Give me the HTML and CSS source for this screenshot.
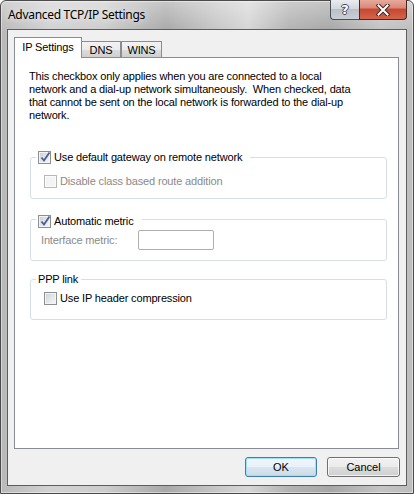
FILE: index.html
```html
<!DOCTYPE html>
<html lang="en">
<head>
    <meta charset="UTF-8">
    <title>Advanced TCP/IP Settings</title>
    <link rel="stylesheet" href="styles.css">
</head>
<body>
    <div class="window">
        <div class="titlebar">
            <span class="title">Advanced TCP/IP Settings</span>
            <div class="caption-buttons">
                <div class="cap-btn help">?</div>
                <div class="cap-btn close">
                    <svg width="14" height="12" viewBox="0 0 14 12">
                        <path d="M2.5 1.5 L11.5 10.5 M11.5 1.5 L2.5 10.5" stroke="#3b2a2a" stroke-width="4" stroke-linecap="square"/>
                        <path d="M2.5 1.5 L11.5 10.5 M11.5 1.5 L2.5 10.5" stroke="#fff" stroke-width="2" stroke-linecap="square"/>
                    </svg>
                </div>
            </div>
        </div>

        <div class="client">
            <div class="tabs">
                <div class="tab active">IP Settings</div>
                <div class="tab dns">DNS</div>
                <div class="tab wins">WINS</div>
            </div>

            <div class="panel">
                <p class="note">This checkbox only applies when you are connected to a local<br>network and a dial-up network simultaneously.&nbsp; When checked, data<br>that cannot be sent on the local network is forwarded to the dial-up<br>network.</p>

                <div class="group gateway">
                    <div class="legend">
                        <span class="check checked">
                            <svg width="11" height="11" viewBox="0 0 11 11"><path d="M1.5 5.5 L4 8.5 L9.5 0.5" fill="none" stroke="#4a5f97" stroke-width="1.8"/></svg>
                        </span>
                        Use default gateway on remote network
                    </div>
                    <div class="row disabled">
                        <span class="check off"></span>
                        Disable class based route addition
                    </div>
                </div>

                <div class="group metric">
                    <div class="legend">
                        <span class="check checked">
                            <svg width="11" height="11" viewBox="0 0 11 11"><path d="M1.5 5.5 L4 8.5 L9.5 0.5" fill="none" stroke="#4a5f97" stroke-width="1.8"/></svg>
                        </span>
                        Automatic metric
                    </div>
                    <div class="field disabled">
                        <span class="field-label">Interface metric:</span>
                        <span class="textbox"></span>
                    </div>
                </div>

                <div class="group ppp">
                    <div class="legend text-only">PPP link</div>
                    <div class="row">
                        <span class="check"></span>
                        Use IP header compression
                    </div>
                </div>
            </div>

            <div class="actions">
                <button class="btn default">OK</button>
                <button class="btn cancel">Cancel</button>
            </div>
        </div>
    </div>
</body>
</html>
```

FILE: styles.css
```css
* {
    box-sizing: border-box;
}

html, body {
    margin: 0;
    padding: 0;
}

body {
    width: 414px;
    height: 494px;
    overflow: hidden;
    font-family: "Liberation Sans", Arial, sans-serif;
    font-size: 11px;
    letter-spacing: -0.15px;
    color: #000;
    background: #fff;
}

.window {
    width: 414px;
    height: 494px;
    border: 1px solid #4b4b4b;
    border-radius: 6px 6px 0 0;
    padding: 0 6px 7px 6px;
    display: flex;
    flex-direction: column;
    background:
        linear-gradient(180deg, rgba(255, 255, 255, 0.35) 0, rgba(255, 255, 255, 0) 30px),
        linear-gradient(90deg, #b9b9b9 0%, #d2d2d2 12%, #cdcdcd 25%, #a9a9a9 40%, #c6c6c6 52%, #d6d6d6 60%, #b3b3b3 70%, #a7a7a7 80%, #c4c4c4 92%, #bdbdbd 100%);
    box-shadow: inset 0 0 0 1px rgba(255, 255, 255, 0.45);
}

/* title bar */

.titlebar {
    height: 28px;
    display: flex;
    align-items: flex-start;
}

.title {
    font-family: "Noto Sans", sans-serif;
    font-size: 12px;
    letter-spacing: -0.3px;
    line-height: 16px;
    margin: 6px 0 0 1px;
    color: #000;
    text-shadow: 0 0 6px rgba(255, 255, 255, 0.9);
}

.caption-buttons {
    margin-left: auto;
    margin-top: -1px;
    display: flex;
}

.cap-btn {
    height: 20px;
    display: flex;
    align-items: center;
    justify-content: center;
    border: 1px solid #4a4f56;
    border-top: none;
}

.help {
    width: 29px;
    border-right: none;
    border-radius: 0 0 0 4px;
    background: linear-gradient(180deg, #e9ecef 0%, #d3d8de 45%, #b9c0c8 50%, #c9cfd6 100%);
    font-family: "DejaVu Sans", sans-serif;
    font-weight: bold;
    font-size: 13px;
    color: #fff;
    text-shadow: 1px 0 0 #44484e, -1px 0 0 #44484e, 0 1px 0 #44484e, 0 -1px 0 #44484e;
}

.close {
    width: 48px;
    border-color: #4d2721;
    border-radius: 0 0 4px 0;
    background: linear-gradient(180deg, #e8a99c 0%, #d98a79 40%, #c8472f 50%, #d3654c 100%);
}

/* client area */

.client {
    flex: 1;
    border: 1px solid #5e5e5e;
    background: #f0f0f0;
    padding: 7px 6px 0 6px;
    display: flex;
    flex-direction: column;
}

.tabs {
    display: flex;
    align-items: flex-end;
    height: 21px;
    margin-bottom: -1px;
    position: relative;
    z-index: 1;
}

.tab {
    height: 16px;
    margin-bottom: 1px;
    border: 1px solid #898c95;
    border-bottom: none;
    background: linear-gradient(180deg, #f3f3f3 0%, #ebebeb 50%, #dddddd 50%, #cfcfcf 100%);
    display: flex;
    align-items: center;
    justify-content: center;
    line-height: 13px;
    padding-top: 1px;
}

.tab.active {
    width: 68px;
    height: 21px;
    margin-bottom: 0;
    background: #fff;
    padding-top: 0;
    padding-bottom: 1px;
}

.tab.dns {
    width: 39px;
    border-left: none;
}

.tab.wins {
    width: 41px;
}

.panel {
    width: 385px;
    height: 392px;
    border: 1px solid #898c95;
    background: #fff;
    padding: 12px 11px 0 14px;
}

.note {
    margin: 0;
    line-height: 13px;
    white-space: nowrap;
}

/* group boxes */

.group {
    width: 357px;
    margin-left: 1px;
    border: 1px solid #d5dfe5;
    border-radius: 3px;
}

.gateway {
    margin-top: 35px;
    padding-bottom: 10px;
}

.metric {
    margin-top: 20px;
    padding-bottom: 10px;
}

.ppp {
    margin-top: 18px;
    padding-bottom: 14px;
}

.legend {
    display: flex;
    align-items: center;
    gap: 3px;
    width: max-content;
    height: 13px;
    line-height: 13px;
    margin: -7px 0 0 5px;
    padding: 0 8px 0 2px;
    background: #fff;
}

.metric .legend {
    margin-top: -5px;
}

.legend.text-only {
    margin-top: -7px;
    padding: 0 3px 0 2px;
}

.row {
    display: flex;
    align-items: center;
    gap: 3px;
    height: 13px;
    line-height: 13px;
    margin-left: 13px;
}

.gateway .row {
    margin-top: 11px;
}

.ppp .row {
    margin-top: 6px;
}

.disabled {
    color: #8a8a8a;
}

.field {
    display: flex;
    align-items: center;
    height: 20px;
    margin: 2px 0 0 10px;
}

.field-label {
    width: 97px;
}

.textbox {
    width: 76px;
    height: 20px;
    border: 1px solid #afafaf;
    border-radius: 2px;
    background: #fff;
}

/* checkboxes */

.check {
    flex: none;
    width: 13px;
    height: 13px;
    border: 1px solid #8e8f8f;
    background: linear-gradient(135deg, #c9ced4 0%, #e4e6e9 50%, #f8f8f8 100%);
    box-shadow: inset 0 0 0 1px #f4f4f4;
    position: relative;
}

.check svg {
    position: absolute;
    left: 1px;
    top: 0;
}

.check.off {
    border-color: #b8b8b8;
    background: #f4f4f4;
    box-shadow: inset 0 0 0 1px #fbfbfb;
}

/* buttons */

.actions {
    display: flex;
    justify-content: flex-end;
    gap: 10px;
    margin-top: 8px;
}

.btn {
    width: 73px;
    height: 20px;
    padding: 0;
    border: 1px solid #707070;
    border-radius: 3px;
    background: linear-gradient(180deg, #f2f2f2 0%, #ebebeb 50%, #dddddd 50%, #cfcfcf 100%);
    box-shadow: inset 0 0 0 1px rgba(255, 255, 255, 0.75);
    font-family: "Liberation Sans", Arial, sans-serif;
    font-size: 11px;
    color: #000;
}

.btn.default {
    width: 72px;
    border-color: #3c7fb1;
    box-shadow: inset 0 0 0 1px #9ce0fb;
    background: linear-gradient(180deg, #f1f7fb 0%, #e8f2f9 50%, #d9e6f0 50%, #cddbe6 100%);
}
```
